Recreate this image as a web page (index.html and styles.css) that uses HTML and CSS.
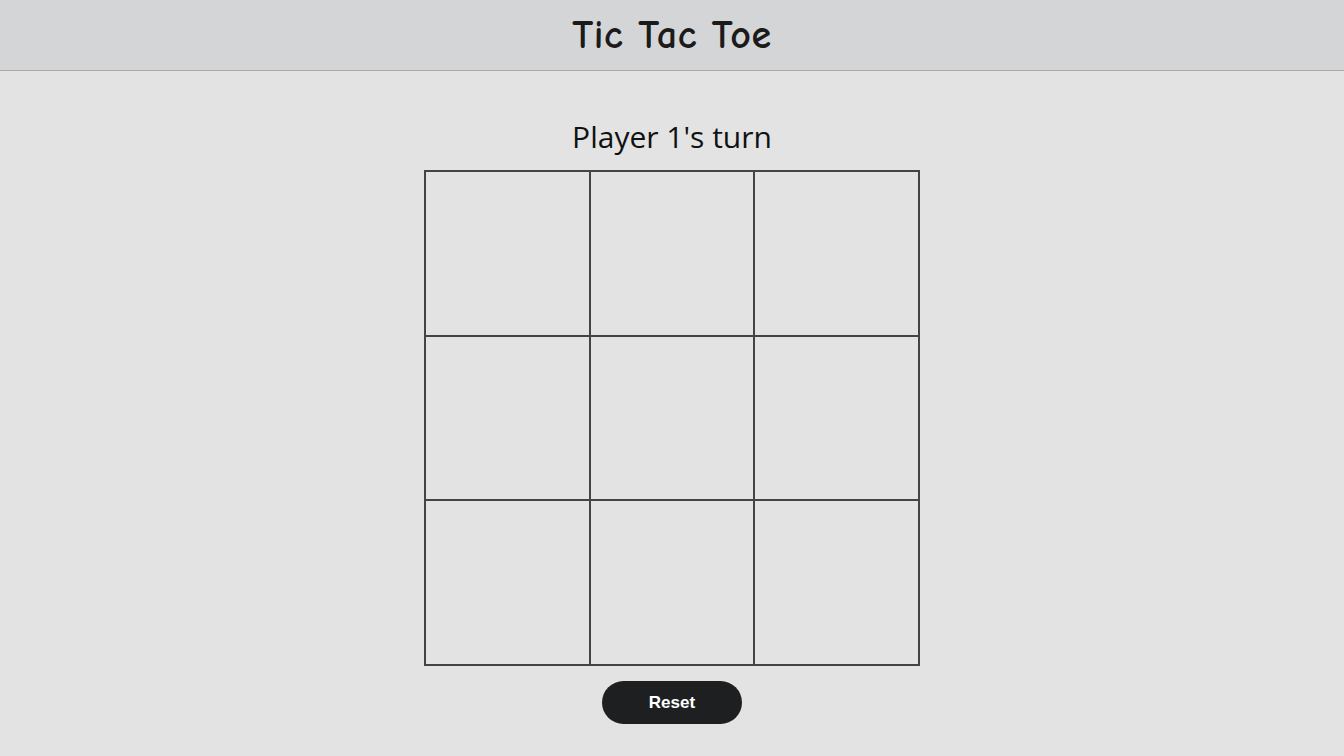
FILE: index.html
```html
<!DOCTYPE html>
<html lang="en">
<head>
<meta charset="utf-8">
<title>Tic Tac Toe</title>
<link rel="stylesheet" href="styles.css">
</head>
<body>
<header class="topbar">
  <h1 class="title">Tic Tac Toe</h1>
</header>
<main class="game">
  <h2 class="status">Player 1's turn</h2>
  <div class="board">
    <div class="cell"></div>
    <div class="cell"></div>
    <div class="cell"></div>
    <div class="cell"></div>
    <div class="cell"></div>
    <div class="cell"></div>
    <div class="cell"></div>
    <div class="cell"></div>
    <div class="cell"></div>
  </div>
  <button class="reset" type="button">Reset</button>
</main>
</body>
</html>
```

FILE: styles.css
```css
html, body {
  margin: 0;
  padding: 0;
}
body {
  background: #e3e3e3;
  font-family: "Open Sans", "Noto Sans", sans-serif;
  color: #111;
}
.topbar {
  height: 70px;
  background: #d4d5d7;
  border-bottom: 1px solid #a9a9a9;
  display: flex;
  align-items: center;
  justify-content: center;
}
.title {
  margin: 0;
  font-family: "Comic Sans MS", "Comic Neue", cursive;
  font-size: 40px;
  font-weight: bold;
  color: #1b1b1b;
  letter-spacing: 0.6px;
}
.game {
  display: flex;
  flex-direction: column;
  align-items: center;
}
.status {
  margin: 46px 0 0 0;
  font-size: 30px;
  font-weight: normal;
  line-height: 40px;
  height: 53px;
}
.board {
  box-sizing: border-box;
  width: 496px;
  height: 496px;
  padding: 2px;
  gap: 2px;
  background: #444;
  display: grid;
  grid-template-columns: repeat(3, 1fr);
  grid-template-rows: repeat(3, 1fr);
}
.cell {
  background: #e3e3e3;
}
.reset {
  margin-top: 15px;
  width: 140px;
  height: 43px;
  border: none;
  border-radius: 22px;
  background: #1e1f21;
  color: #fff;
  font-family: "Liberation Sans", Arial, sans-serif;
  font-weight: bold;
  font-size: 17px;
  cursor: pointer;
}
```
